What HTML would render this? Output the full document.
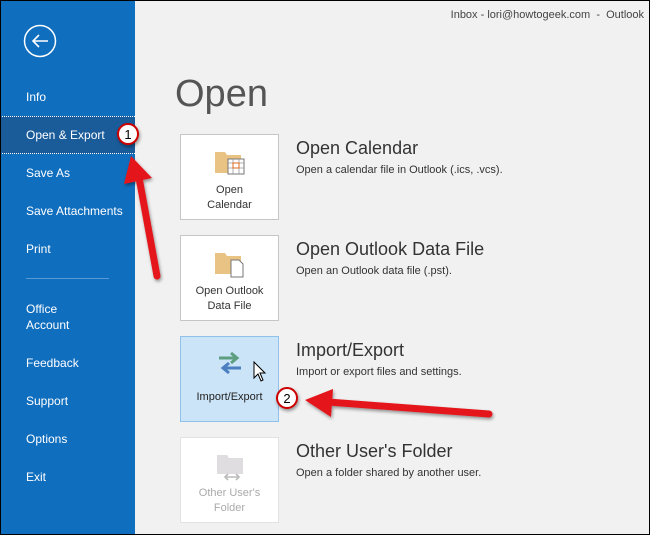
<!DOCTYPE html>
<html><head><style>
*{margin:0;padding:0;box-sizing:border-box}
body{width:650px;height:535px;overflow:hidden;background:#f1f1f1;font-family:"Liberation Sans",sans-serif;position:relative}
.frame{position:absolute;left:0;top:0;width:650px;height:535px;border:1px solid #000;pointer-events:none}
.side{position:absolute;left:0;top:0;width:135px;height:535px;background:#106ebe}
.it{position:absolute;left:26px;color:#fff;font-size:12px;line-height:16px}
.hl{position:absolute;left:0;top:116px;width:135px;height:38px;background:#1a5b9a;border-top:1px dotted #fff;border-bottom:1px dotted #fff}
.tile{position:absolute;left:180px;width:99px;height:86px;background:#fff;border:1px solid #c6c6c6;text-align:center;font-size:11px;color:#333;line-height:15px}
.t{position:absolute;left:296px;font-size:18px;color:#333}
.d{position:absolute;left:296px;font-size:11px;color:#333}
</style></head><body>
<div class="side">
<svg style="position:absolute;left:23px;top:24px" width="34" height="34"><circle cx="17" cy="17" r="15.5" fill="none" stroke="#fff" stroke-width="1.5"/><path d="M10 17H25M16 11L10 17L16 23" fill="none" stroke="#fff" stroke-width="1.6"/></svg>
<div class="hl"></div>
<div class="it" style="top:89px">Info</div>
<div class="it" style="top:127px">Open &amp; Export</div>
<div class="it" style="top:165px">Save As</div>
<div class="it" style="top:203px">Save Attachments</div>
<div class="it" style="top:241px">Print</div>
<div style="position:absolute;left:26px;top:278px;width:83px;height:1px;background:#5b9ad6"></div>
<div class="it" style="top:301px">Office<br>Account</div>
<div class="it" style="top:355px">Feedback</div>
<div class="it" style="top:393px">Support</div>
<div class="it" style="top:431px">Options</div>
<div class="it" style="top:469px">Exit</div>
</div>
<div style="position:absolute;right:6px;top:9px;font-size:11px;color:#444">Inbox - lori@howtogeek.com &nbsp;- &nbsp;Outlook</div>
<div style="position:absolute;left:175px;top:73px;font-size:38px;color:#555">Open</div>

<div class="tile" style="top:134px"><svg width="34" height="30" style="margin-top:13px"><path d="M2 4h10l2 3h14v18H2z" fill="#e8c383"/><rect x="15" y="11" width="16" height="15" fill="#fff" stroke="#777"/><path d="M15 15h16M20 11v15M26 11v15M15 20h16" stroke="#999" stroke-width="0.8"/><rect x="20" y="15" width="6" height="5" fill="none" stroke="#e06a1e"/></svg><div>Open<br>Calendar</div></div>
<div class="t" style="top:138px">Open Calendar</div>
<div class="d" style="top:164px">Open a calendar file in Outlook (.ics, .vcs).</div>

<div class="tile" style="top:235px"><svg width="34" height="30" style="margin-top:13px"><path d="M2 4h10l2 3h14v18H2z" fill="#e8c383"/><path d="M18 11h8l4 4v13H18z" fill="#fff" stroke="#777"/></svg><div>Open Outlook<br>Data File</div></div>
<div class="t" style="top:239px">Open Outlook Data File</div>
<div class="d" style="top:265px">Open an Outlook data file (.pst).</div>

<div class="tile" style="top:336px;background:#cce4f7;border-color:#8fc1ea"><svg width="30" height="28" style="margin-top:12px"><path d="M4 9h18M16 4l6 5-6 5" stroke="#5e9e80" stroke-width="3" fill="none"/><path d="M26 19H8M14 14l-6 5 6 5" stroke="#4b7fbf" stroke-width="3" fill="none"/></svg><div style="margin-top:8px;color:#222">Import/Export</div></div>
<svg style="position:absolute;left:253px;top:361px" width="14" height="22"><path d="M1 1v16l4-4 3 7 2-1-3-7h5z" fill="#fff" stroke="#000"/></svg>
<div class="t" style="top:340px">Import/Export</div>
<div class="d" style="top:366px">Import or export files and settings.</div>

<div class="tile" style="top:437px;border-color:#e2e2e2;color:#aaa"><svg width="34" height="30" style="margin-top:13px"><path d="M4 4h10l2 3h14v16H4z" fill="#e0dde0"/><path d="M12 26h14M15 23l-3 3 3 3M23 23l3 3-3 3" stroke="#bbb" stroke-width="1.6" fill="none"/></svg><div>Other User's<br>Folder</div></div>
<div class="t" style="top:441px">Other User's Folder</div>
<div class="d" style="top:467px">Open a folder shared by another user.</div>

<svg style="position:absolute;left:0;top:0" width="650" height="535">
<defs><filter id="s"><feDropShadow dx="1" dy="2" stdDeviation="1.5" flood-opacity="0.4"/></filter></defs>
<g filter="url(#s)" fill="#e4161b">
<path d="M157 276L138 172" stroke="#e4161b" stroke-width="7" stroke-linecap="round"/>
<path d="M131 156L124 184L152 178Z"/>
<path d="M489 414L328 402" stroke="#e4161b" stroke-width="7" stroke-linecap="round"/>
<path d="M305 400L333 389L331 417Z"/>
<circle cx="128" cy="134" r="10" fill="#fff" stroke="#c00" stroke-width="2"/>
<circle cx="287" cy="398" r="10" fill="#fff" stroke="#c00" stroke-width="2"/>
</g>
<text x="128" y="139" font-size="13" text-anchor="middle" font-family="Liberation Sans" fill="#000">1</text>
<text x="287" y="403" font-size="13" text-anchor="middle" font-family="Liberation Sans" fill="#000">2</text>
</svg>
<div class="frame"></div>
</body></html>
